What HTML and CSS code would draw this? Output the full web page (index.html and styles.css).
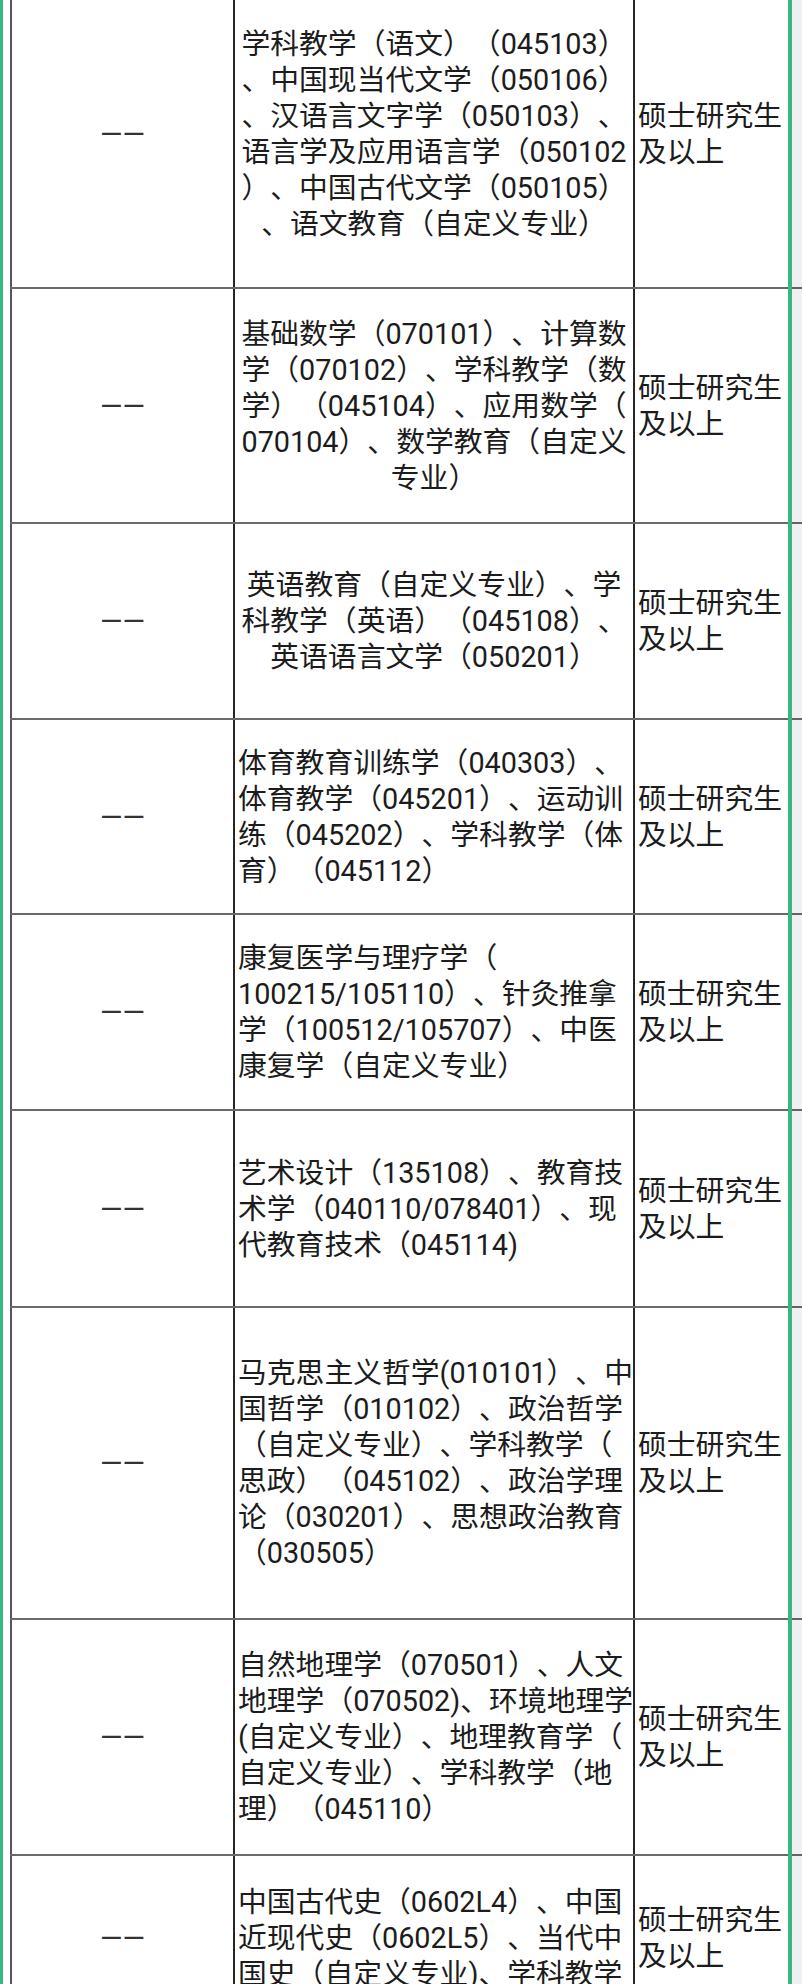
FILE: index.html
```html
<!DOCTYPE html>
<html lang="zh-CN">
<head>
<meta charset="utf-8">
<title>招聘专业要求</title>
<link rel="stylesheet" href="styles.css">
</head>
<body>
<div class="viewport">
  <table class="majors">
    <colgroup>
      <col class="c-code">
      <col class="c-major">
      <col class="c-degree">
      <col class="c-more">
    </colgroup>
    <tbody>
      <tr class="r1">
        <td class="dash">——</td>
        <td class="major center">学科教学（语文）（045103）<br>、中国现当代文学（050106）<br>、汉语言文字学（050103）、<br>语言学及应用语言学（050102<br>）、中国古代文学（050105）<br>、语文教育（自定义专业）</td>
        <td class="degree">硕士研究生及以上</td>
        <td class="more"></td>
      </tr>
      <tr class="r2">
        <td class="dash">——</td>
        <td class="major center">基础数学（070101）、计算数<br>学（070102）、学科教学（数<br>学）（045104）、应用数学（<br>070104）、数学教育（自定义<br>专业）</td>
        <td class="degree">硕士研究生及以上</td>
        <td class="more"></td>
      </tr>
      <tr class="r3">
        <td class="dash">——</td>
        <td class="major center">英语教育（自定义专业）、学<br>科教学（英语）（045108）、<br>英语语言文学（050201）</td>
        <td class="degree">硕士研究生及以上</td>
        <td class="more"></td>
      </tr>
      <tr class="r4">
        <td class="dash">——</td>
        <td class="major">体育教育训练学（040303）、<br>体育教学（045201）、运动训<br>练（045202）、学科教学（体<br>育）（045112）</td>
        <td class="degree">硕士研究生及以上</td>
        <td class="more"></td>
      </tr>
      <tr class="r5">
        <td class="dash">——</td>
        <td class="major">康复医学与理疗学（<br>100215/105110）、针灸推拿<br>学（100512/105707）、中医<br>康复学（自定义专业）</td>
        <td class="degree">硕士研究生及以上</td>
        <td class="more"></td>
      </tr>
      <tr class="r6">
        <td class="dash">——</td>
        <td class="major">艺术设计（135108）、教育技<br>术学（040110/078401）、现<br>代教育技术（045114)</td>
        <td class="degree">硕士研究生及以上</td>
        <td class="more"></td>
      </tr>
      <tr class="r7">
        <td class="dash">——</td>
        <td class="major">马克思主义哲学(010101）、中<br>国哲学（010102）、政治哲学<br>（自定义专业）、学科教学（<br>思政）（045102）、政治学理<br>论（030201）、思想政治教育<br>（030505）</td>
        <td class="degree">硕士研究生及以上</td>
        <td class="more"></td>
      </tr>
      <tr class="r8">
        <td class="dash">——</td>
        <td class="major">自然地理学（070501）、人文<br>地理学（070502)、环境地理学<br>(自定义专业）、地理教育学（<br>自定义专业）、学科教学（地<br>理）（045110）</td>
        <td class="degree">硕士研究生及以上</td>
        <td class="more"></td>
      </tr>
      <tr class="r9">
        <td class="dash">——</td>
        <td class="major">中国古代史（0602L4）、中国<br>近现代史（0602L5）、当代中<br>国史（自定义专业)、学科教学</td>
        <td class="degree">硕士研究生及以上</td>
        <td class="more"></td>
      </tr>
    </tbody>
  </table>
  <div class="frame"></div>
  <div class="shade"></div>
</div>
</body>
</html>
```

FILE: styles.css
```css
html, body {
  margin: 0;
  padding: 0;
  background: #ffffff;
  overflow: hidden;
}

.viewport {
  position: relative;
  width: 802px;
  height: 1984px;
  overflow: hidden;
  font-family: Roboto, "Noto Sans CJK SC", sans-serif;
  font-size: 28.8px;
  line-height: 36px;
  color: #1c1c1c;
  text-spacing-trim: space-all;
}

.majors {
  border-collapse: collapse;
  table-layout: fixed;
  width: 882px;
  margin-top: -21px;
  margin-left: 10px;
}

.c-code { width: 223px; }
.c-major { width: 400px; }
.c-degree { width: 157px; }
.c-more { width: 102px; }

.majors td {
  border-top: 2px solid #6a6a6a;
  border-bottom: 2px solid #6a6a6a;
  border-left: 2px solid #262626;
  border-right: 2px solid #262626;
  padding: 0 3px;
  vertical-align: middle;
  white-space: nowrap;
  text-spacing-trim: space-all;
}

.majors td.dash {
  border-left-color: #555555;
  text-align: center;
  color: #333333;
}

.majors td.major {
  text-align: left;
}

.majors td.major.center {
  text-align: center;
}

.majors td.degree {
  white-space: normal;
  text-align: left;
}

.r1 { height: 308px; }
.r2 { height: 235px; }
.r3 { height: 196px; }
.r4 { height: 195px; }
.r5 { height: 196px; }
.r6 { height: 197px; }
.r7 { height: 312px; }
.r8 { height: 236px; }
.r9 { height: 166px; }

.frame {
  position: absolute;
  top: 0;
  bottom: 0;
  left: 0;
  width: 785px;
  border-left: 3px solid #36b883;
  border-right: 4px solid #36b883;
  pointer-events: none;
}

.shade {
  position: absolute;
  top: 0;
  bottom: 0;
  left: 792px;
  right: 0;
  background: rgba(0, 0, 0, 0.06);
  pointer-events: none;
}
```
